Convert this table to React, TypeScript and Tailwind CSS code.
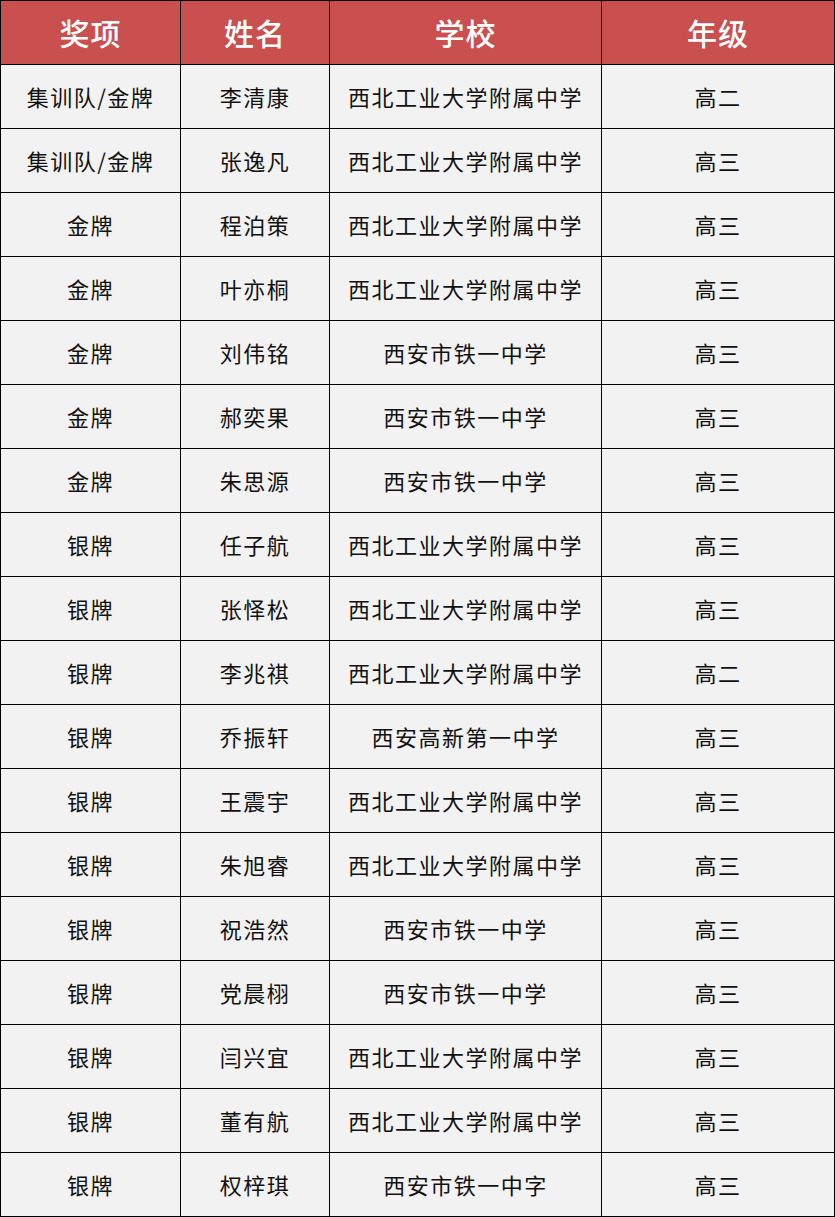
const HEAD = ["奖项", "姓名", "学校", "年级"];

const NWPU = "西北工业大学附属中学";
const TIE = "西安市铁一中学";

const rows: [string, string, string, string][] = [
  ["集训队/金牌", "李清康", NWPU, "高二"],
  ["集训队/金牌", "张逸凡", NWPU, "高三"],
  ["金牌", "程泊策", NWPU, "高三"],
  ["金牌", "叶亦桐", NWPU, "高三"],
  ["金牌", "刘伟铭", TIE, "高三"],
  ["金牌", "郝奕果", TIE, "高三"],
  ["金牌", "朱思源", TIE, "高三"],
  ["银牌", "任子航", NWPU, "高三"],
  ["银牌", "张怿松", NWPU, "高三"],
  ["银牌", "李兆祺", NWPU, "高二"],
  ["银牌", "乔振轩", "西安高新第一中学", "高三"],
  ["银牌", "王震宇", NWPU, "高三"],
  ["银牌", "朱旭睿", NWPU, "高三"],
  ["银牌", "祝浩然", TIE, "高三"],
  ["银牌", "党晨栩", TIE, "高三"],
  ["银牌", "闫兴宜", NWPU, "高三"],
  ["银牌", "董有航", NWPU, "高三"],
  ["银牌", "权梓琪", "西安市铁一中字", "高三"],
];

export default function App() {
  return (
    <div className="w-[835px] h-[1217px] bg-white font-['Noto_Sans_CJK_SC','Noto_Sans',sans-serif]">
      <div className="grid grid-cols-[179px_148px_271px_1fr] auto-rows-[63px] gap-px p-px bg-black">
        {HEAD.map((h) => (
          <div
            key={h}
            className="flex items-center justify-center bg-[#c9504f] text-white text-[30px] font-medium tracking-[1px]"
          >
            {h}
          </div>
        ))}
        {rows.map((r, i) =>
          r.map((c, j) => (
            <div
              key={`${i}-${j}`}
              className="flex items-center justify-center bg-[#f2f2f2] text-[#111] text-[22px] tracking-[1.5px]"
            >
              {c}
            </div>
          ))
        )}
      </div>
    </div>
  );
}
